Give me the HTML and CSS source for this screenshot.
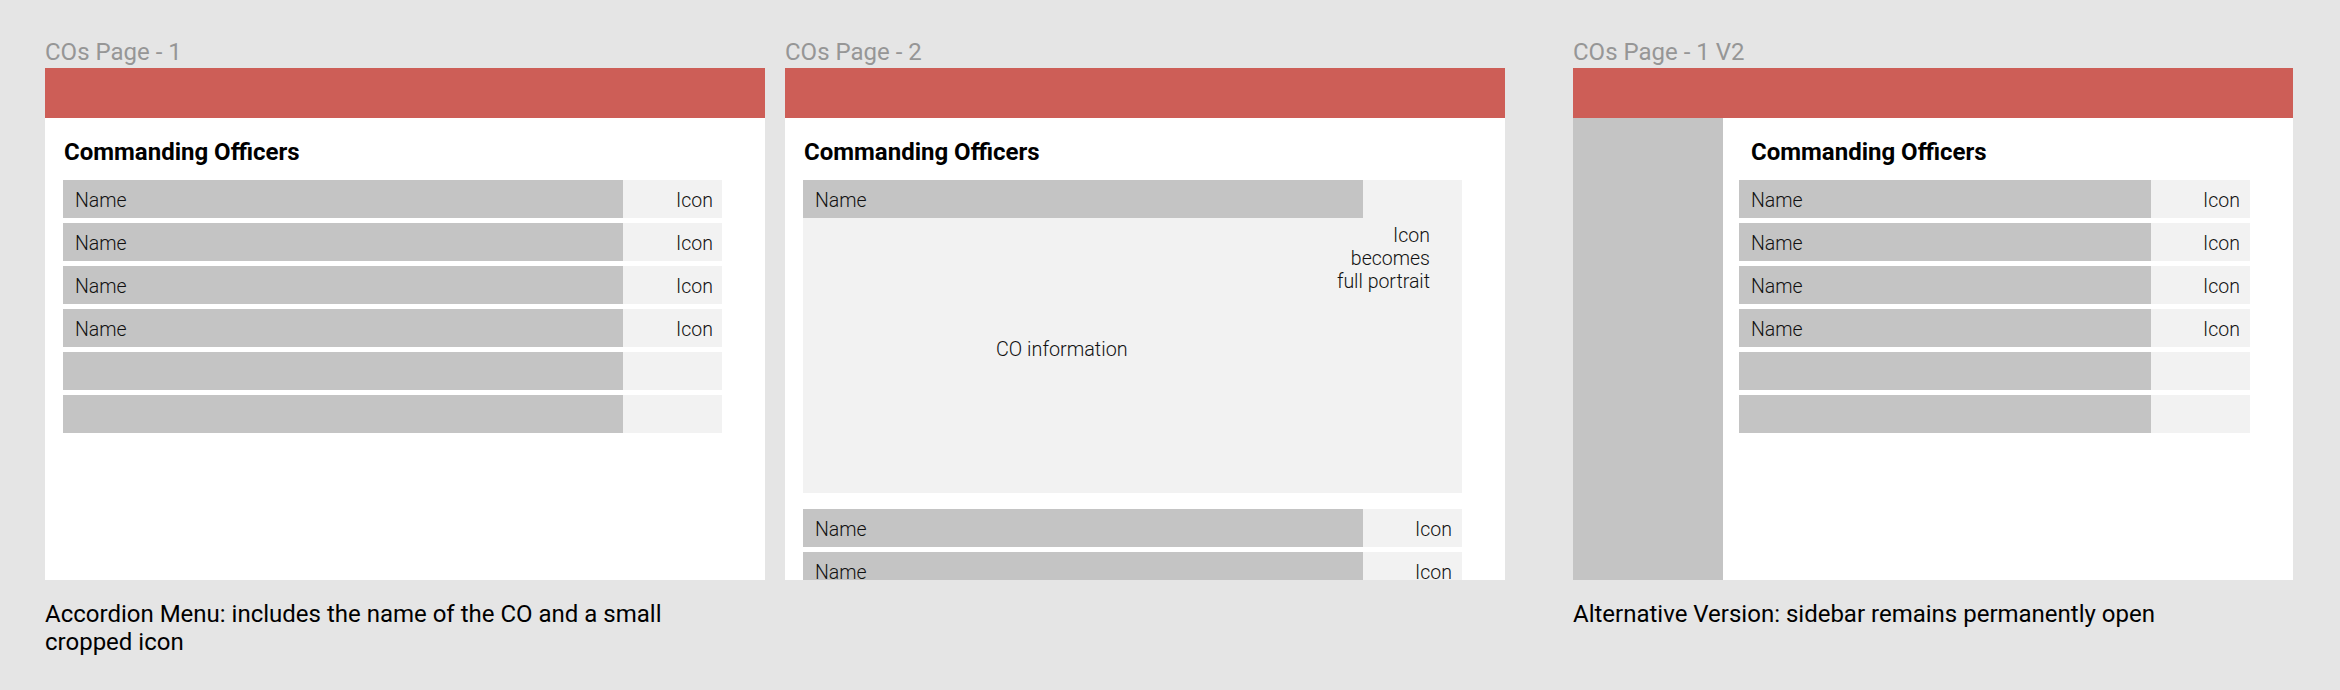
FILE: index.html
```html
<!DOCTYPE html>
<html lang="en">
<head>
<meta charset="utf-8">
<title>COs Pages</title>
<link rel="stylesheet" href="styles.css">
</head>
<body>
<div class="canvas">
  <section class="board">
    <div class="board-label">COs Page - 1</div>
    <div class="frame">
      <div class="topbar"></div>
      <div class="content">
        <h2 class="title">Commanding Officers</h2>
        <div class="list">
          <div class="row"><div class="name">Name</div><div class="icon">Icon</div></div>
          <div class="row"><div class="name">Name</div><div class="icon">Icon</div></div>
          <div class="row"><div class="name">Name</div><div class="icon">Icon</div></div>
          <div class="row"><div class="name">Name</div><div class="icon">Icon</div></div>
          <div class="row"><div class="name"></div><div class="icon"></div></div>
          <div class="row"><div class="name"></div><div class="icon"></div></div>
        </div>
      </div>
    </div>
    <p class="caption">Accordion Menu: includes the name of the CO and a small cropped icon</p>
  </section>

  <section class="board">
    <div class="board-label">COs Page - 2</div>
    <div class="frame">
      <div class="topbar"></div>
      <div class="content">
        <h2 class="title">Commanding Officers</h2>
        <div class="open">
          <div class="open-bar">Name</div>
          <div class="portrait">Icon<br>becomes<br>full portrait</div>
          <div class="info">CO information</div>
        </div>
        <div class="list list-after">
          <div class="row"><div class="name">Name</div><div class="icon">Icon</div></div>
          <div class="row"><div class="name">Name</div><div class="icon">Icon</div></div>
        </div>
      </div>
    </div>
  </section>

  <section class="board board-alt">
    <div class="board-label">COs Page - 1 V2</div>
    <div class="frame">
      <div class="topbar"></div>
      <div class="split">
        <aside class="sidebar"></aside>
        <div class="content content-alt">
          <h2 class="title title-alt">Commanding Officers</h2>
          <div class="list list-narrow">
            <div class="row"><div class="name">Name</div><div class="icon">Icon</div></div>
            <div class="row"><div class="name">Name</div><div class="icon">Icon</div></div>
            <div class="row"><div class="name">Name</div><div class="icon">Icon</div></div>
            <div class="row"><div class="name">Name</div><div class="icon">Icon</div></div>
            <div class="row"><div class="name"></div><div class="icon"></div></div>
            <div class="row"><div class="name"></div><div class="icon"></div></div>
          </div>
        </div>
      </div>
    </div>
    <p class="caption">Alternative Version: sidebar remains permanently open</p>
  </section>
</div>
</body>
</html>
```

FILE: styles.css
```css
html, body {
  margin: 0;
  padding: 0;
}

body {
  background: #e5e5e5;
  font-family: Roboto, "Liberation Sans", Arial, sans-serif;
  color: #000;
  width: 2340px;
  height: 690px;
  overflow: hidden;
}

.canvas {
  display: flex;
  align-items: flex-start;
  padding: 39px 0 0 45px;
}

.board {
  width: 720px;
  flex: 0 0 720px;
}

.board + .board {
  margin-left: 20px;
}

.board.board-alt {
  margin-left: 68px;
}

.board-label {
  font-size: 24px;
  line-height: 27px;
  font-weight: 400;
  color: #969696;
  margin-bottom: 2px;
  white-space: nowrap;
}

.frame {
  height: 512px;
  background: #ffffff;
  overflow: hidden;
  display: flex;
  flex-direction: column;
}

.topbar {
  height: 50px;
  flex: 0 0 50px;
  background: #cd5e57;
}

.content {
  padding: 21px 0 0 18px;
}

.title {
  margin: 0 0 15px 1px;
  font-size: 24px;
  line-height: 26px;
  font-weight: 700;
  color: #000;
}

.list {
  display: flex;
  flex-direction: column;
  gap: 5px;
  width: 659px;
}

.row {
  display: grid;
  grid-template-columns: 560px 99px;
  height: 38px;
  font-size: 19.5px;
  font-weight: 300;
  color: #111;
}

.name {
  background: #c4c4c4;
  padding: 3px 0 0 12px;
  line-height: 35px;
}

.icon {
  background: #f2f2f2;
  padding: 3px 9px 0 0;
  line-height: 35px;
  text-align: right;
}

.open {
  width: 659px;
  height: 313px;
  background: #f2f2f2;
  display: flex;
  flex-direction: column;
  font-size: 19.5px;
  font-weight: 300;
  color: #111;
}

.open-bar {
  width: 560px;
  height: 38px;
  box-sizing: border-box;
  background: #c4c4c4;
  padding: 3px 0 0 12px;
  line-height: 35px;
}

.portrait {
  margin-top: 5.5px;
  padding-right: 32px;
  text-align: right;
  line-height: 23px;
}

.info {
  margin-top: 45px;
  padding-left: 193px;
  font-size: 19.8px;
  line-height: 23px;
}

.list-after {
  margin-top: 16px;
}

.list-after .icon {
  padding-right: 10px;
}

.split {
  flex: 1;
  display: flex;
}

.sidebar {
  width: 150px;
  flex: 0 0 150px;
  background: #c4c4c4;
}

.content-alt {
  padding-left: 16px;
}

.title-alt {
  margin-left: 12px;
}

.list-narrow {
  width: 511px;
}

.list-narrow .row {
  grid-template-columns: 412px 99px;
}

.list-narrow .icon {
  padding-right: 10px;
}

.caption {
  margin: 20px 0 0 0;
  max-width: 650px;
  font-size: 24px;
  line-height: 28.3px;
  font-weight: 400;
  color: #000;
}
```
